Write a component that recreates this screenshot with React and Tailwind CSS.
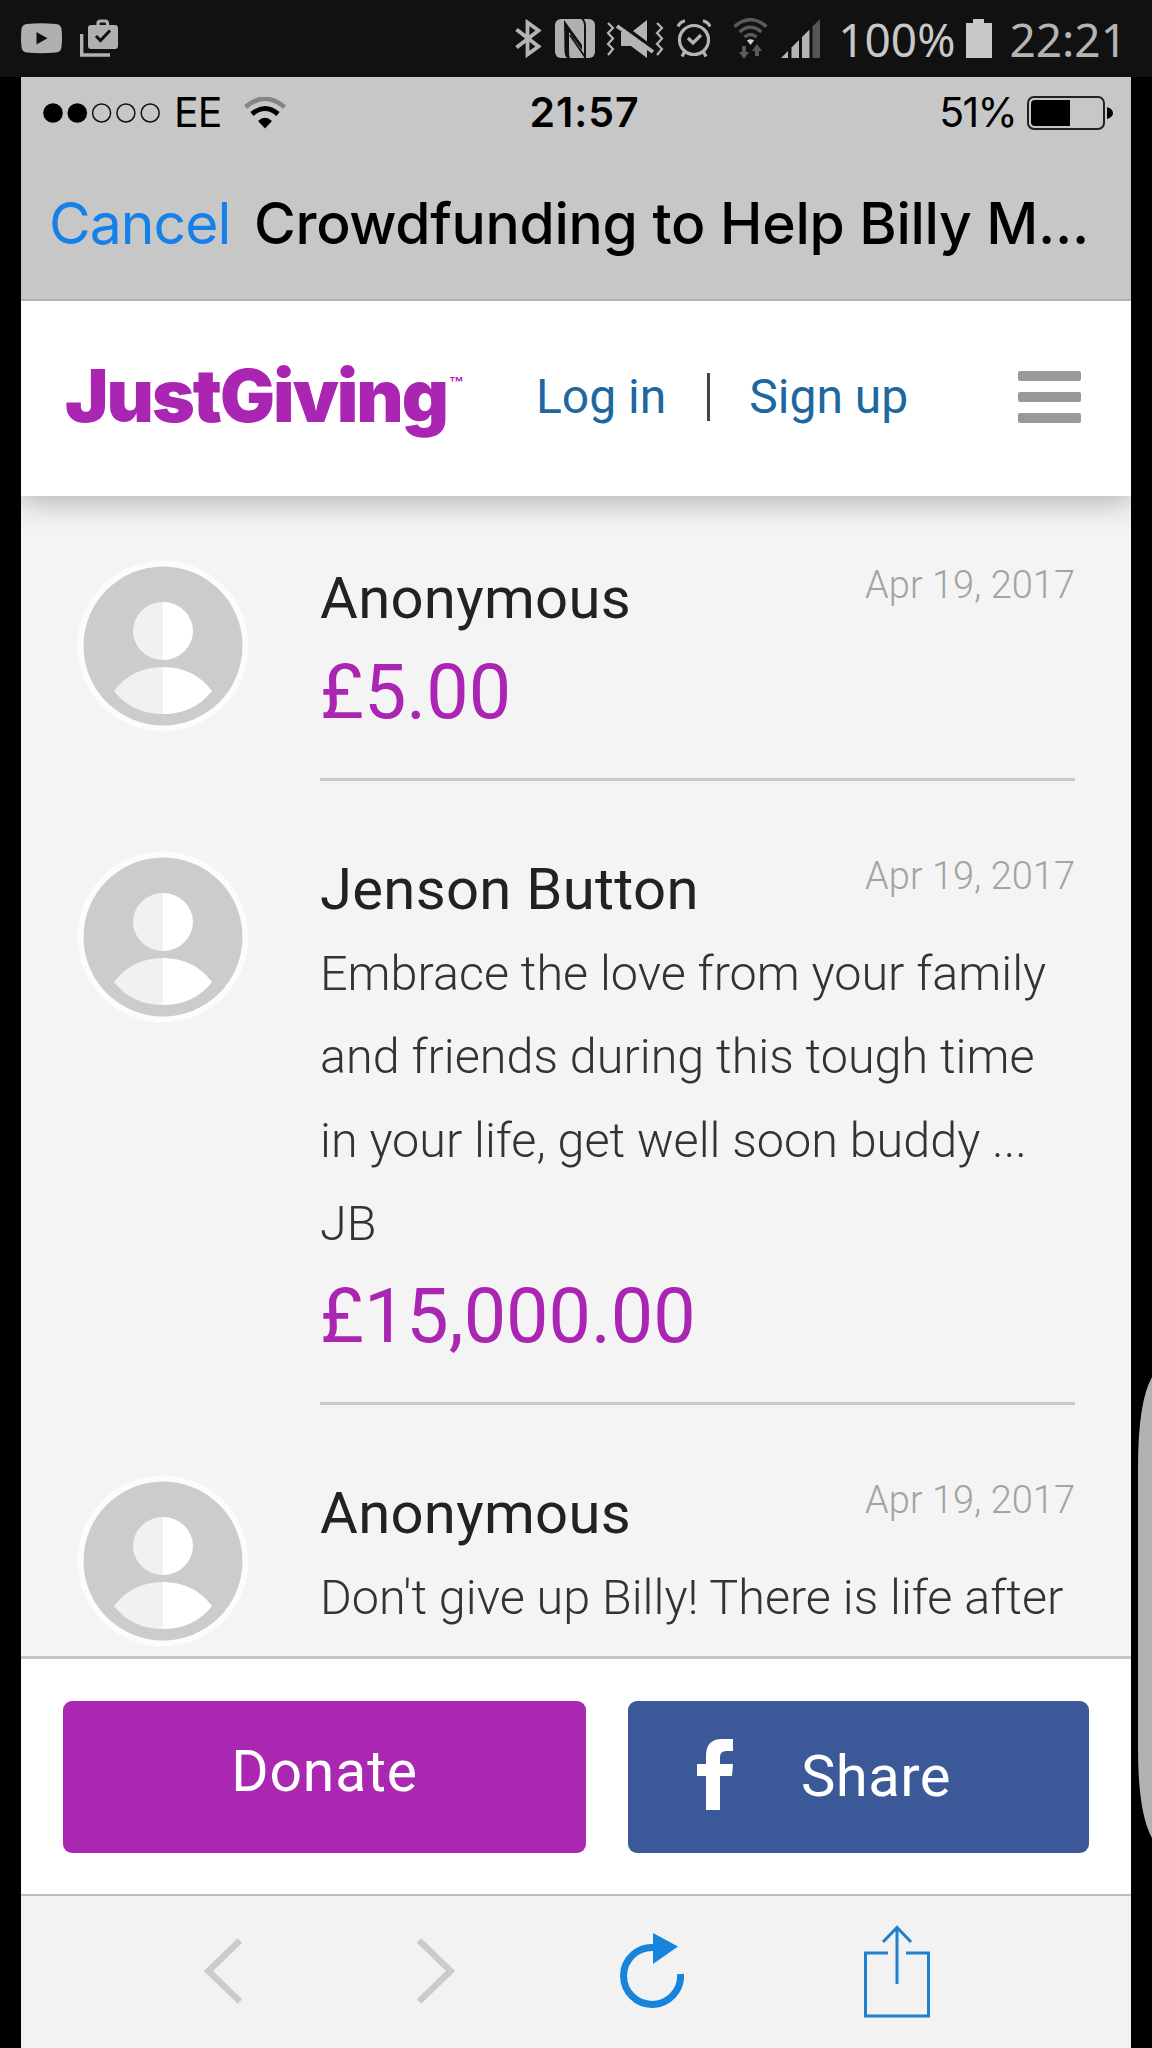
import React from "react"

const donations = [
    {
        id: 1,
        name: "Anonymous",
        date: "Apr 19, 2017",
        message: [],
        amount: "£5.00",
    },
    {
        id: 2,
        name: "Jenson Button",
        date: "Apr 19, 2017",
        message: [
            "Embrace the love from your family",
            "and friends during this tough time",
            "in your life, get well soon buddy ...",
            "JB",
        ],
        amount: "£15,000.00",
    },
    {
        id: 3,
        name: "Anonymous",
        date: "Apr 19, 2017",
        message: ["Don't give up Billy! There is life after"],
        amount: null,
    },
]

// Android status bar at the very top
const AndroidStatusBar = () => (
    <div className="flex h-[77px] shrink-0 items-center bg-[#111111] pl-[21px] pr-[25px] text-[#b4b4b4]">
        {/* YouTube */}
        <svg className="h-[31px] w-[41px]" viewBox="0 0 41 31">
            <path d="M6 1Q20 -0.500 35 1Q40 1.500 40.500 6Q41.500 15 40.500 24Q40 29 35 29.500Q20 31 6 29.500Q1 29 0.500 24Q-0.500 15 0.500 6Q1 1.500 6 1Z" fill="#b0b0b0" />
            <path d="M15.500 9L26.500 15.300L15.500 21.600Z" fill="#111111" />
        </svg>
        {/* Play store updates */}
        <svg className="mb-[2px] ml-[18px] h-[38px] w-[38px]" viewBox="0 0 38 38" fill="none">
            <path d="M1.700 15V36H30" stroke="#b0b0b0" strokeWidth="3.400" />
            <path d="M18 8V4.500Q18 2 20.500 2H25Q27.500 2 27.500 4.500V8" stroke="#b0b0b0" strokeWidth="3.200" />
            <rect x="8" y="6" width="30" height="24" rx="3" fill="#b0b0b0" />
            <path d="M16 17L20.500 21.500L30 11.500" stroke="#111111" strokeWidth="3" />
        </svg>

        <div className="ml-auto flex items-center">
            {/* Bluetooth */}
            <svg className="h-[39px] w-[27px]" viewBox="0 0 27 39" fill="none" stroke="#b4b4b4" strokeWidth="3.800">
                <path d="M1.500 10.500L23.500 27.500L12.500 35.500V3.500L23.500 11.500L1.500 28.500" />
            </svg>
            {/* NFC */}
            <svg className="ml-[13px] h-[39px] w-[40px]" viewBox="0 0 40 39">
                <rect width="40" height="39" rx="6" fill="#b0b0b0" />
                <path d="M9 1L27 26V31L14 13V33Q14 37 15 39H12Q9.500 37 9.500 32Z" fill="#111111" />
                <path d="M15 16L30 38" fill="none" stroke="#111111" strokeWidth="1.800" />
                <path d="M26 0H29Q31 3 31 8V39H29V7Q29 2 26 0Z" fill="#111111" />
            </svg>
            {/* Vibrate / mute */}
            <svg className="ml-[11px] h-[38px] w-[58px]" viewBox="0 0 58 38" fill="none">
                <path d="M2 3L7 8L2 13L7 18.500L2 24L7 29L2 35" stroke="#b4b4b4" strokeWidth="2.200" />
                <path d="M51 3L56 8L51 13L56 18.500L51 24L56 29L51 35" stroke="#b4b4b4" strokeWidth="2.200" />
                <path d="M27 11L41 0V21.500Z" fill="#b4b4b4" />
                <path d="M15 12H20L41 26V38L25 26H15Z" fill="#b4b4b4" />
                <path d="M11 6L47 32" stroke="#b4b4b4" strokeWidth="4" />
            </svg>
            {/* Alarm */}
            <svg className="ml-[12px] h-[39px] w-[36px]" viewBox="0 0 36 39" fill="none" stroke="#b4b4b4" strokeWidth="3.200">
                <circle cx="18" cy="21" r="14.500" />
                <path d="M2 7.500Q4 3 9 1.800M34 7.500Q32 3 27 1.800M9 32L6 37.500M27 32L30 37.500" />
                <path d="M12 19L17 24L25 16" />
            </svg>
            {/* Wifi with traffic arrows */}
            <svg className="ml-[21px] h-[41px] w-[35px]" viewBox="0 0 35 41" fill="none">
                <path d="M1.500 8.500Q17.500 -5 33.500 8.500" stroke="#5a5a5a" strokeWidth="3.600" />
                <path d="M6.500 14Q17.500 4.500 28.500 14" stroke="#5a5a5a" strokeWidth="3.400" />
                <path d="M11.500 19Q17.500 14 23.500 19" stroke="#5a5a5a" strokeWidth="3.200" />
                <path d="M14 22.500Q17.500 20 21 22.500L17.500 27Z" fill="#d0d0d0" />
                <path d="M11 28V36M24 38V31" stroke="#5a5a5a" strokeWidth="4" />
                <path d="M6 34H16L11 41ZM19 33H29L24 26Z" fill="#5a5a5a" />
            </svg>
            {/* Cell signal */}
            <svg className="ml-[13px] h-[39px] w-[39px]" viewBox="0 0 39 39">
                <path d="M0 39L7 32V39Z" fill="#b4b4b4" />
                <path d="M10.500 28.500L18 21V39H10.500Z" fill="#b4b4b4" />
                <path d="M21 18L28.500 10.500V39H21Z" fill="#b4b4b4" />
                <path d="M31.500 7.500L39 0V39H31.500Z" fill="#555555" />
            </svg>
            <span className="ml-[18px] pt-px font-['Noto_Sans'] text-[46px] leading-[76px] text-[#c8c8c8]">100%</span>
            {/* Battery */}
            <svg className="ml-[11px] h-[39px] w-[26px]" viewBox="0 0 26 39" fill="#c8c8c8">
                <path d="M7 0H18V4H26V39H0V4H7Z" />
            </svg>
            <span className="ml-[17px] pt-px font-['Noto_Sans'] text-[46px] leading-[76px]">22:21</span>
        </div>
    </div>
)

// iOS status row + navigation title
const BrowserHeader = () => (
    <div className="h-[224px] shrink-0 border-b-2 border-[#b2b2b2] bg-[#c7c7c7] font-['Inter'] text-black">
        <div className="grid h-[72px] grid-cols-3 items-center pl-[22px] pr-[18px]">
            <div className="flex items-center">
                <svg className="h-[22px] w-[118px]" viewBox="0 0 118 22">
                    <circle cx="10" cy="11" r="9.800" />
                    <circle cx="34.300" cy="11" r="9.800" />
                    <g fill="none" stroke="#111111" strokeWidth="1.500">
                        <circle cx="58.600" cy="11" r="9" />
                        <circle cx="82.900" cy="11" r="9" />
                        <circle cx="107.200" cy="11" r="9" />
                    </g>
                </svg>
                <span className="ml-[13px] text-[41px] tracking-[-1px]">EE</span>
                <svg className="ml-[23px] h-[32px] w-[42px]" viewBox="0 0 42 32" fill="none">
                    <path d="M1.500 10Q21 -6.500 40.500 10" stroke="#858585" strokeWidth="4.500" />
                    <path d="M8 17Q21 6 34 17" stroke="#000000" strokeWidth="5" />
                    <path d="M14 24Q21 17.500 28 24L21 31.500Z" fill="#000000" />
                </svg>
            </div>
            <span className="pl-[13px] text-center text-[41px] font-semibold tracking-[0.9px]">21:57</span>
            <div className="flex items-center justify-end">
                <span className="text-[41px] tracking-[-1.7px]">51%</span>
                <svg className="ml-[11px] h-[34px] w-[86px]" viewBox="0 0 86 34">
                    <rect x="1" y="1" width="76" height="32" rx="6" fill="none" stroke="#222222" strokeWidth="2" />
                    <path d="M8 4H43V30H8Q4 30 4 26V8Q4 4 8 4Z" />
                    <path d="M80 11Q86 13 86 17Q86 21 80 23Z" />
                </svg>
            </div>
        </div>
        <div className="flex h-[148px] items-center pl-[28px] pt-px">
            <span className="w-[205px] whitespace-nowrap text-[57px] tracking-[-0.9px] text-[#1581e8]">Cancel</span>
            <h1 className="whitespace-nowrap text-[57px] font-medium tracking-[-0.3px]">
                Crowdfunding to Help Billy M...
            </h1>
        </div>
    </div>
)

const SiteHeader = () => (
    <header className="z-10 flex h-[195px] shrink-0 items-center bg-white pb-[4px] pl-[44px] pr-[50px] shadow-[0_6px_28px_rgba(0,0,0,0.28)]">
        <div className="flex w-[400px] pb-[2px] text-[#aa25b2]">
            <span className="font-['Inter'] text-[73px] font-black leading-[100px] tracking-[-2px]">JustGiving</span>
            <span className="ml-[2px] mt-[28px] font-['Liberation_Sans'] text-[15px] font-bold leading-none">™</span>
        </div>
        <nav className="ml-[71px] flex items-center text-[48px] text-[#21679f]">
            <a>Log in</a>
            <span className="ml-[41px] mr-[39px] h-[48px] w-[3px] bg-[#444444]" />
            <a>Sign up</a>
        </nav>
        <div className="ml-auto flex flex-col gap-[11px]">
            <span className="h-[10px] w-[63px] rounded-[2px] bg-[#999999]" />
            <span className="h-[10px] w-[63px] rounded-[2px] bg-[#999999]" />
            <span className="h-[10px] w-[63px] rounded-[2px] bg-[#999999]" />
        </div>
    </header>
)

const Avatar = () => (
    <svg className="h-[172px] w-[172px] shrink-0" viewBox="0 0 172 172">
        <circle cx="86" cy="86" r="85.500" fill="#fcfcfc" />
        <circle cx="86" cy="86" r="79.500" fill="#cccccc" />
        <path d="M86 42A30 29 0 0 0 86 100ZM86 107Q55 107 37 131Q55 154 86 154Z" fill="#f1f1f1" />
        <path d="M86 42A30 29 0 0 1 86 100ZM86 107Q117 107 135 131Q117 154 86 154Z" fill="#ffffff" />
    </svg>
)

const Donation = ({ donation }) => (
    <li className="flex pl-[56px] pr-[56px]">
        <Avatar />
        <div className="mb-[70px] ml-[71px] min-w-0 flex-1 border-b-3 border-[#c9c9c9] pb-[43px]">
            <div className="flex h-[81px] justify-between">
                <h2 className="text-[58px] leading-[77px] tracking-[0.3px] text-[#222222]">{donation.name}</h2>
                <span className="text-[38px] font-light leading-[50px] text-[#a3a3a3]">{donation.date}</span>
            </div>
            {donation.message.map((line) => (
                <p key={line} className="whitespace-nowrap text-[48.5px] font-light leading-[83.3px] text-[#333333]">
                    {line}
                </p>
            ))}
            {donation.amount && (
                <p className="pt-[9px] text-[75.5px] leading-[85px] text-[#aa25b2]">{donation.amount}</p>
            )}
        </div>
    </li>
)

const ActionBar = () => (
    <div className="flex h-[238px] shrink-0 border-t-3 border-[#c6c6c6] bg-white pl-[42px] pr-[42px] pt-[42px] text-[57px] text-white">
        <button className="flex h-[152px] w-[523px] items-center justify-center rounded-[9px] bg-[#aa27b2] pb-[10px] tracking-[0.9px]">
            Donate
        </button>
        <button className="ml-[42px] flex h-[152px] flex-1 items-center rounded-[9px] bg-[#3b5998] pl-[69px]">
            <svg className="mb-[6px] h-[71px] w-[36px]" viewBox="0 0 36 71" fill="#ffffff">
                <path d="M9 71V37H0V25H9V17Q9 0 25 0H36V12H29Q23 12 23 18V25H36L35 37H23V71Z" />
            </svg>
            <span className="mb-[2px] ml-[68px] text-[58px] tracking-[0.4px]">Share</span>
        </button>
    </div>
)

const Toolbar = () => (
    <div className="flex h-[154px] shrink-0 border-t-2 border-[#bdbdbd] bg-[#f2f2f2] pl-[183px]">
        <svg className="mt-[42px] h-[66px] w-[38px]" viewBox="0 0 38 66" fill="none" stroke="#cbcbcb" strokeWidth="6.500">
            <path d="M36 2.500L4.500 33L36 63.500" />
        </svg>
        <svg className="ml-[175px] mt-[42px] h-[66px] w-[38px]" viewBox="0 0 38 66" fill="none" stroke="#cbcbcb" strokeWidth="6.500">
            <path d="M2 2.500L33.500 33L2 63.500" />
        </svg>
        <svg className="ml-[165px] mt-[37px] h-[75px] w-[64px]" viewBox="0 0 64 75">
            <path d="M34 14.500A28.500 28.500 0 1 0 60.500 41" fill="none" stroke="#1683dd" strokeWidth="7" />
            <path d="M33 0L58 13.500L33 31Z" fill="#1683dd" />
        </svg>
        <svg className="ml-[180px] mt-[29px] h-[93px] w-[66px]" viewBox="0 0 66 93" fill="none" stroke="#2180cc" strokeWidth="3">
            <path d="M24 28H1.500V91H64.500V28H42" />
            <path d="M33 59V3M19 17L33 2.500L47 17" />
        </svg>
    </div>
)

const App = () => {
    return (
        <div className="relative flex h-[2048px] w-[1152px] flex-col overflow-hidden bg-black font-['Roboto',sans-serif]">
            <AndroidStatusBar />

            <div className="ml-[21px] flex min-h-0 w-[1110px] flex-1 flex-col">
                <BrowserHeader />
                <div className="flex min-h-0 flex-1 flex-col overflow-hidden">
                    <SiteHeader />
                    <ul className="min-h-0 flex-1 overflow-hidden bg-[#f4f4f4] pt-[64px]">
                        {donations.map((donation) => (
                            <Donation key={donation.id} donation={donation} />
                        ))}
                    </ul>
                </div>
                <ActionBar />
                <Toolbar />
            </div>

            {/* Edge panel handle */}
            <svg className="absolute right-0 top-[1377px] h-[461px] w-[14px]" viewBox="0 0 14 461" fill="#b2b2b2">
                <path d="M14 0Q0 25 0 90V371Q0 436 14 461Z" />
            </svg>
        </div>
    )
}

export default App
